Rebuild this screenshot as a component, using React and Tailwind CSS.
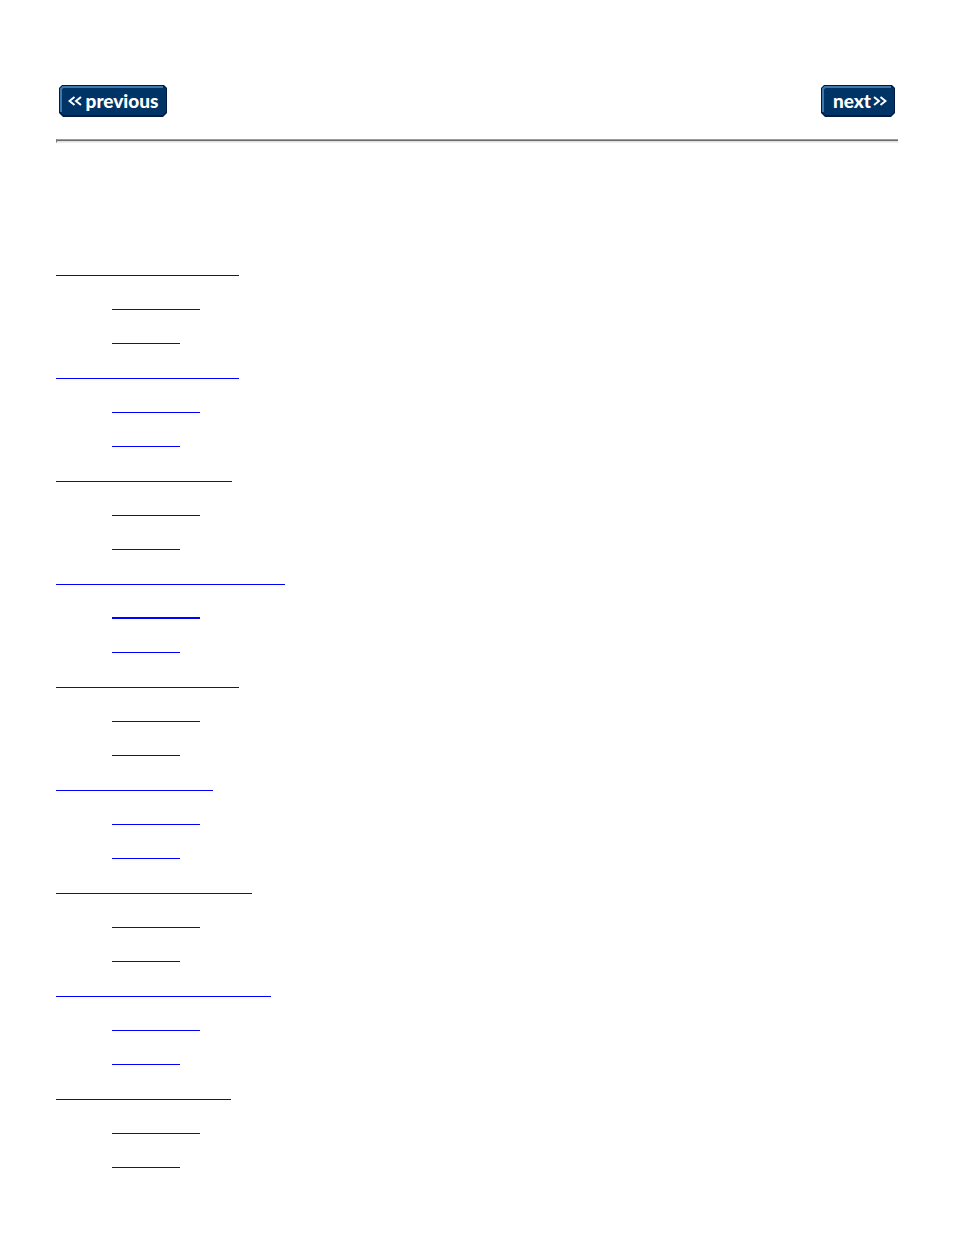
const sections = [
  { id: 1, width: 'w-[183px]' },
  { id: 2, width: 'w-[183px]' },
  { id: 3, width: 'w-[176px]' },
  { id: 4, width: 'w-[229px]', heavy: true },
  { id: 5, width: 'w-[183px]' },
  { id: 6, width: 'w-[157px]' },
  { id: 7, width: 'w-[196px]' },
  { id: 8, width: 'w-[215px]' },
  { id: 9, width: 'w-[175px]' }
]

const Chevrons = ({ flip }) => (
  <svg
    viewBox="0 0 14 10"
    className={`w-3.5 h-2.5 shrink-0 ${flip ? 'rotate-180' : ''}`}
    fill="none"
    stroke="#fff"
    strokeWidth="2"
    aria-hidden="true"
  >
    <path d="M6.5 1 L1.5 5 L6.5 9 M13 1 L8 5 L13 9" />
  </svg>
)

// Beveled plate that sits behind the navigation labels
const Plate = ({ width }) => (
  <svg
    className="absolute inset-0 -z-10"
    width={width}
    height="32"
    viewBox={`0 0 ${width} 32`}
    aria-hidden="true"
  >
    <path
      d={`M3 0 H${width - 3} L${width} 3 V28 L${width - 4} 32 H4 L0 28 V3 Z`}
      fill="#001a44"
    />
    <path
      d={`M4 1 H${width - 4} L${width - 1} 4 V27 L${width - 4} 30 H4 L1 27 V4 Z`}
      fill="#003366"
    />
    <path
      d={`M2 27 V4 L4 2 H${width - 4}`}
      fill="none"
      stroke="#3f78ad"
      strokeWidth="2"
    />
  </svg>
)

const navClass =
  "relative isolate flex h-8 items-center justify-center text-[19px] leading-8 font-black text-white font-['Lato',sans-serif]"

const Entry = ({ label, width, heavy }) => (
  <a
    href="#"
    aria-label={label}
    className={`block h-5 border-[#0000ff] ${heavy ? 'border-b-2' : 'border-b'} ${width}`}
  />
)

const App = () => {
  return (
    <main className="min-h-screen bg-white px-14 pt-[85px] pb-14">
      <nav className="flex justify-between px-[3px]">
        <a href="#" className={`${navClass} w-[108px] gap-1`}>
          <Plate width={108} />
          <Chevrons />
          <span>previous</span>
        </a>
        <a href="#" className={`${navClass} w-[74px] gap-0.5 pl-1`}>
          <Plate width={74} />
          <span>next</span>
          <Chevrons flip />
        </a>
      </nav>

      <hr className="mt-[22px] h-1 border-t border-b border-l border-t-[#9c9c9c] border-b-[#eeeeee] border-l-[#777777] bg-linear-to-b from-[#6b6b6b] from-50% to-[#e2e2e2] to-50%" />

      <ul className="mt-[113px]">
        {sections.map(({ id, width, heavy }) => (
          <li key={id} className="h-[103px]">
            <Entry label={`Section ${id}`} width={width} />
            <ul className="mt-3.5 ml-14 space-y-3.5">
              <li>
                <Entry label={`Section ${id}, part 1`} width="w-[88px]" heavy={heavy} />
              </li>
              <li>
                <Entry label={`Section ${id}, part 2`} width="w-[68px]" />
              </li>
            </ul>
          </li>
        ))}
      </ul>
    </main>
  )
}

export default App
